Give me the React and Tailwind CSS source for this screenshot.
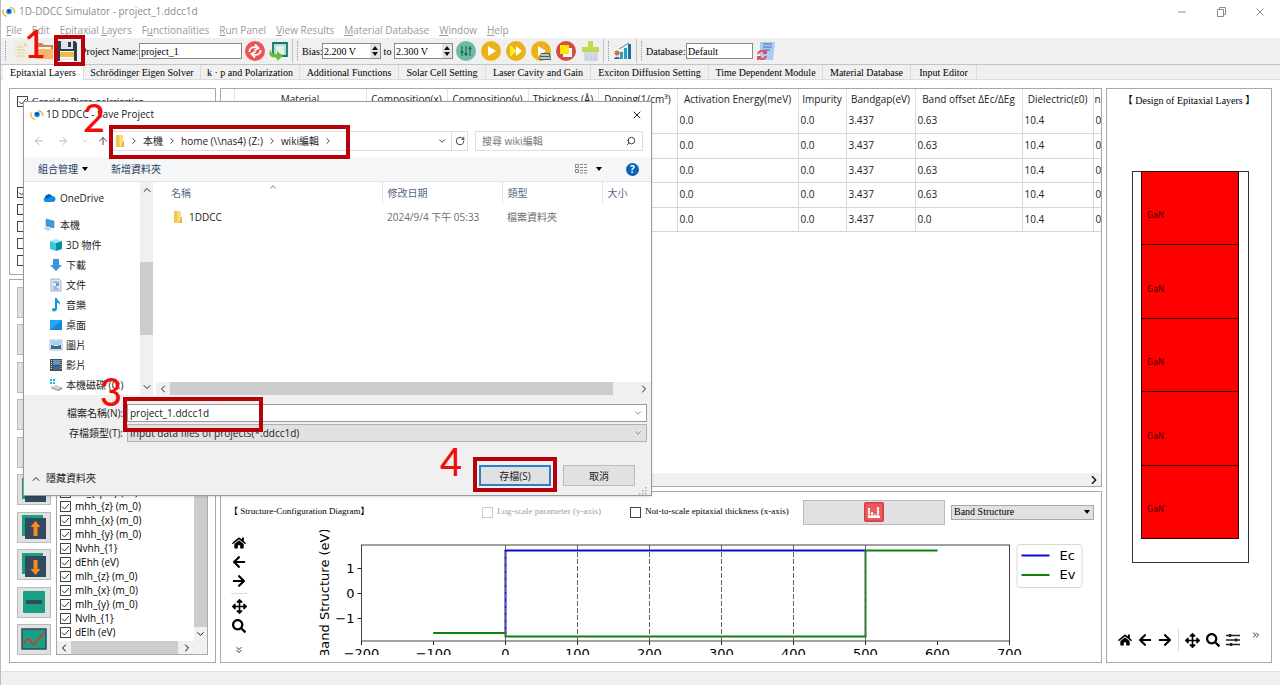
import React, {useState} from 'react'
import {
  FaHome,
  FaArrowLeft,
  FaArrowRight,
  FaArrowsAlt,
  FaSearch,
} from 'react-icons/fa'
import {
  LuArrowLeft,
  LuArrowRight,
  LuArrowUp,
  LuChevronDown,
  LuChevronLeft,
  LuChevronRight,
  LuChevronUp,
  LuChevronsDown,
  LuChevronsRight,
  LuMinus,
  LuRotateCw,
  LuSearch,
  LuX,
} from 'react-icons/lu'

const menus = [
  ['', 'F', 'ile'],
  ['', 'E', 'dit'],
  ['', 'E', 'pitaxial ', 'L', 'ayers'],
  ['F', 'u', 'nctionalities'],
  ['', 'R', 'un Panel'],
  ['', 'V', 'iew Results'],
  ['', 'M', 'aterial Database'],
  ['', 'W', 'indow'],
  ['', 'H', 'elp'],
]

const tabs = [
  {label: 'Epitaxial Layers', width: 'w-[81px]'},
  {label: 'Schrödinger Eigen Solver', width: 'w-[117px]'},
  {label: 'k · p and Polarization', width: 'w-[99px]'},
  {label: 'Additional Functions', width: 'w-[99px]'},
  {label: 'Solar Cell Setting', width: 'w-[87px]'},
  {label: 'Laser Cavity and Gain', width: 'w-[105px]'},
  {label: 'Exciton Diffusion Setting', width: 'w-[118px]'},
  {label: 'Time Dependent Module', width: 'w-[114px]'},
  {label: 'Material Database', width: 'w-[88px]'},
  {label: 'Input Editor', width: 'w-[66px]'},
]

const columns = [
  {label: '', width: 'w-[13px]'},
  {label: 'Material', width: 'w-[132px]'},
  {label: 'Composition(x)', width: 'w-[81px]'},
  {label: 'Composition(y)', width: 'w-[81px]'},
  {label: 'Thickness (Å)', width: 'w-[70px]'},
  {label: 'Doping(1/cm³)', width: 'w-[79px]'},
  {label: 'Activation Energy(meV)', width: 'w-[121px]'},
  {label: 'Impurity', width: 'w-[48px]'},
  {label: 'Bandgap(eV)', width: 'w-[69px]'},
  {label: 'Band offset ΔEc/ΔEg', width: 'w-[107px]'},
  {label: 'Dielectric(ε0)', width: 'w-[71px]'},
  {label: 'n', width: 'w-[9px]'},
]

const offsets = ['0.63', '0.63', '0.63', '0.63', '0.0']

const parameters = [
  'dE_{sp/z} (eV)',
  'mhh_{z} (m_0)',
  'mhh_{x} (m_0)',
  'mhh_{y} (m_0)',
  'Nvhh_{1}',
  'dEhh (eV)',
  'mlh_{z} (m_0)',
  'mlh_{x} (m_0)',
  'mlh_{y} (m_0)',
  'Nvlh_{1}',
  'dElh (eV)',
]

const AppLogo = () => (
  <svg viewBox="0 0 14 12" className="h-3 w-3.5 shrink-0">
    <path d="M1.5 3.5A6 5 0 0 0 5 10.5" fill="none" stroke="#f3c45a" strokeWidth="1.8" />
    <path d="M8 1.5A5 4.5 0 0 1 12.5 7" fill="none" stroke="#cfc27a" strokeWidth="1.6" />
    <circle cx="7" cy="5.5" r="2.8" fill="#1b8ae6" />
    <circle cx="7" cy="5" r="1.4" fill="#0a3f9c" />
  </svg>
)

const NewIcon = () => (
  <svg viewBox="0 0 20 20" className="h-5 w-5">
    <path d="M3 1h10l4 4v14H3z" fill="#f3ecd6" />
    <path d="M13 1v4h4z" fill="#ded5b5" />
    <path d="M6 6h6M6 9h8M6 12h8M6 15h8" stroke="#ddd2ac" />
  </svg>
)

const FolderOpenIcon = () => (
  <svg viewBox="0 0 20 20" className="h-5 w-5">
    <path d="M1 2h7l2 2h9v4H1z" fill="#c98850" />
    <path d="M3 6h14v4H3z" fill="#fdf7ef" />
    <path d="M1 8h18v10H2z" fill="#fbb56b" />
  </svg>
)

const FloppyIcon = () => (
  <svg viewBox="0 0 20 20" className="h-5 w-5">
    <path d="M0 0h18l2 2v18H0z" fill="#323c50" />
    <path d="M4 0h12v8H4z" fill="#dfe4ea" />
    <path d="M11 1h3v5h-3z" fill="#323c50" />
    <path d="M3 10h14v10H3z" fill="#fff" />
    <path d="M3 11h14v5H3z" fill="#f2bd3a" />
    <path d="M3 18h14" stroke="#cfd4dc" />
  </svg>
)

const ReloadIcon = () => (
  <svg viewBox="0 0 20 20" className="h-5 w-5">
    <circle cx="10" cy="10" r="10" fill="#ec5453" />
    <g fill="none" stroke="#fff" strokeWidth="1.8">
      <path d="M4.5 11C4 7 8 5 12.5 7" />
      <path d="M10 3.500l3.500 3.500-4 2.500" />
      <path d="M15.5 9C16 13 12 15 7.5 13" />
      <path d="M10 16.500L6.500 13l4-2.500" />
    </g>
  </svg>
)

const ExportIcon = () => (
  <svg viewBox="0 0 20 20" className="h-5 w-5">
    <path d="M4 2h14v13H4z" fill="#b4dcd4" stroke="#177a68" strokeWidth="1.8" />
    <path d="M7 5h8v8H7z" fill="#e3f0ee" />
    <path d="M2 8c-1 4 2 5 6 5v-3l6 5-6 5v-3C2 17-2 14 2 8z" fill="#5fbf35" />
  </svg>
)

const TuneIcon = () => (
  <svg viewBox="0 0 20 20" className="h-5 w-5">
    <circle cx="10" cy="10" r="10" fill="#68bda4" />
    <path d="M6 5v10M10 5v10M14 5v10" stroke="#33635d" strokeWidth="1.2" />
    <path d="M4.500 11h3M8.500 13h3M12.500 7.500h3" stroke="#33635d" strokeWidth="2.2" />
  </svg>
)

const PlayIcon = ({kind}) => (
  <svg viewBox="0 0 20 20" className="h-5 w-5">
    <circle cx="10" cy="10" r="10" fill="#ecb117" />
    {kind === 'fast' ? (
      <>
        <path d="M4 4l7 6-7 6z" fill="#ffee2e" />
        <path d="M10 5l6 5-6 5z" fill="#fff" />
      </>
    ) : (
      <path d="M7 5l8 5-8 5z" fill="#fff" />
    )}
    {kind === 'queue' && (
      <>
        <path d="M10 12h9l1 7H8z" fill="#4b5a63" />
        <path d="M10 14h8M9 17h10" stroke="#dfe7ec" strokeWidth="1.5" />
      </>
    )}
  </svg>
)

const StopIcon = () => (
  <svg viewBox="0 0 20 20" className="h-5 w-5">
    <circle cx="10" cy="10" r="10" fill="#d84b44" />
    <path d="M7 7h9v9H7z" fill="#fff" />
    <path d="M4 4h9v9H4z" fill="#ffe600" />
  </svg>
)

const BroomIcon = () => (
  <svg viewBox="0 0 20 20" className="h-5 w-5">
    <path d="M7 0h5v6h6v5H1V6h6z" fill="#c3d94e" />
    <path d="M3 11h14v9H3z" fill="#d2dae6" />
    <path d="M6 14v6M10 14v6M14 14v6" stroke="#bcc6d4" />
  </svg>
)

const ResultsIcon = () => (
  <svg viewBox="0 0 20 20" className="h-5 w-5">
    <path d="M7 11h3v7H7zM11 7h3v11h-3z" fill="#2b9dbf" />
    <path d="M15 3h3v15h-3z" fill="#1a6f9c" />
    <path d="M6 8l5-3 5-3" stroke="#2b9dbf" fill="none" />
    <circle cx="4" cy="12" r="2.5" fill="#c8743c" />
    <path d="M1 18c1-3 5-3 6 0z" fill="#2f6f8c" />
  </svg>
)

const DatabaseIcon = () => (
  <svg viewBox="0 0 20 20" className="h-5 w-5">
    <path d="M4 1h15l-2 18H4z" fill="#a9cdf0" />
    <path d="M7 3h9M7 6h9M7 9h7" stroke="#466fae" strokeWidth="1.2" />
    <g fill="none" stroke="#e4475d" strokeWidth="1.8">
      <path d="M2 13c1-4 6-4 8-1M10 9v3H7" />
      <path d="M10 15c-1 4-6 4-8 1M2 19v-3h3" />
    </g>
  </svg>
)

const SlidersIcon = () => (
  <svg viewBox="0 0 14 14" className="h-3.5 w-3.5">
    <path d="M0 2.500h14M0 7h14M0 11.500h14" stroke="#222" strokeWidth="1.3" />
    <path d="M4 1v3M10 5.500v3M5 10v3" stroke="#222" strokeWidth="2.4" />
  </svg>
)

const FolderIcon = () => (
  <svg viewBox="0 0 10 12" className="h-3 w-2.5 shrink-0">
    <path d="M1 0h7v12H1z" fill="#fbdc83" />
    <path d="M1 0h3l1 12H1z" fill="#f3c553" />
    <path d="M8 6h1v6H6z" fill="#e8b544" />
  </svg>
)

const CloudIcon = () => (
  <svg viewBox="0 0 14 10" className="h-2.5 w-3.5 shrink-0">
    <path d="M3 9a3 3 0 0 1 0-5 4 4 0 0 1 7-1 3 3 0 0 1 1 6z" fill="#1490df" />
    <path d="M3 4a4 4 0 0 1 7-1L5 6z" fill="#0a5cab" />
  </svg>
)

const PlaceIcon = ({kind}) => (
  <svg viewBox="0 0 14 14" className="h-3.5 w-3.5 shrink-0">
    {kind === 'pc' && (
      <>
        <path d="M4 1l8 2v7L4 8z" fill="#2d9fe8" stroke="#6a7e8e" strokeWidth=".6" />
        <path d="M1 10l4-1 5 2-4 2z" fill="#c7ced4" />
      </>
    )}
    {kind === 'cube' && (
      <>
        <path d="M1 3l6-2 6 2-6 2z" fill="#9cecf5" />
        <path d="M1 3l6 2v8l-6-2z" fill="#38c8dc" />
        <path d="M13 3L7 5v8l6-2z" fill="#0d8ca8" />
      </>
    )}
    {kind === 'download' && <path d="M4 1h6v6h3l-6 6-6-6h3z" fill="#3d92dd" />}
    {kind === 'doc' && (
      <>
        <path d="M2 1h8l2 2v10H2z" fill="#e4eaf0" stroke="#92a0ac" strokeWidth=".8" />
        <path d="M4 4h6M4 9h4M4 11h6" stroke="#5d92c0" />
        <path d="M7 5h3v3H7z" fill="#55a5e0" />
      </>
    )}
    {kind === 'music' && (
      <path d="M6 0h2c0 3 4 3 3 7-1-2-2-2-3-2v6c0 3-5 3-5 1s2-2 3-2z" fill="#1597e5" />
    )}
    {kind === 'desktop' && (
      <>
        <path d="M1 2h12v10H1z" fill="#1485dc" />
        <path d="M1 2h12L3 11H1z" fill="#26a4f3" />
      </>
    )}
    {kind === 'picture' && (
      <>
        <path d="M1 2h12v10H1z" fill="#fff" stroke="#98a4ad" strokeWidth=".8" />
        <path d="M2 3h10v4H2z" fill="#9fd3f2" />
        <path d="M2 7l5 1 5-1v4H2z" fill="#2d6d9b" />
      </>
    )}
    {kind === 'video' && (
      <>
        <path d="M1 1h12v12H1z" fill="#474b50" />
        <path d="M4 2h7v5H4z" fill="#5c93cf" />
        <path d="M4 8h7v4H4z" fill="#3e6594" />
        <path d="M2.500 2v10M12 2v10" stroke="#ddd" strokeDasharray="1 1" />
      </>
    )}
    {kind === 'disk' && (
      <>
        <path d="M1 1h2v2H1zM4 1h2v2H4zM1 4h2v2H1zM4 4h2v2H4z" fill="#1bb0ee" />
        <path d="M2 9l5-2 6 2-4 3z" fill="#cdd3d8" />
        <path d="M2 9l7 3 4-3v2l-4 2-7-3z" fill="#7d868e" />
      </>
    )}
  </svg>
)

const places = [
  {kind: 'cube', label: '3D 物件'},
  {kind: 'download', label: '下載'},
  {kind: 'doc', label: '文件'},
  {kind: 'music', label: '音樂'},
  {kind: 'desktop', label: '桌面'},
  {kind: 'picture', label: '圖片'},
  {kind: 'video', label: '影片'},
  {kind: 'disk', label: '本機磁碟 (C:)'},
]

const CheckBox = ({id, label, checked = false, disabled = false}) => (
  <span className="flex items-center gap-1 whitespace-nowrap">
    <input
      id={id}
      type="checkbox"
      defaultChecked={checked}
      disabled={disabled}
      aria-label={label ? undefined : id}
      className="peer h-[11px] w-[11px] shrink-0 appearance-none border border-[#444] bg-white bg-center bg-no-repeat checked:bg-[url('data:image/svg+xml,%3Csvg%20xmlns=%22http://www.w3.org/2000/svg%22%20viewBox=%220%200%209%209%22%3E%3Cpath%20d=%22M1%204.500l2.500%202.500L8%202%22%20fill=%22none%22%20stroke=%22%23333%22/%3E%3C/svg%3E')] disabled:border-[#ccc]"
    />
    {label && (
      <label htmlFor={id} className="peer-disabled:text-[#a0a0a0]">
        {label}
      </label>
    )}
  </span>
)

const Grip = () => (
  <span className="mx-1 h-5 border-l border-dotted border-[#999]" />
)

const IconButton = ({label, children}) => (
  <button aria-label={label} className="flex shrink-0 items-center justify-center">
    {children}
  </button>
)

const SpinBox = ({id, value}) => (
  <span className="flex h-4 w-[59px] items-center justify-between border border-[#888] bg-white pl-px">
    <input id={id} aria-label={id} defaultValue={value} className="w-[46px] bg-transparent outline-none" />
    <span className="flex h-full w-2.5 items-center justify-center bg-[#e4e4e4]">
      <svg viewBox="0 0 6 10" className="h-2.5 w-1.5">
        <path d="M0 4l3-4 3 4zM0 6l3 4 3-4z" fill="#111" />
      </svg>
    </span>
  </span>
)

const TitleBar = () => (
  <header className="flex h-[23px] shrink-0 items-center bg-white pr-3.5 pl-px text-[10px] text-[#8c8c8c]">
    <AppLogo />
    <h1 className="ml-[3px]">1D-DDCC Simulator - project_1.ddcc1d</h1>
    <div className="ml-auto flex items-center gap-[27px]">
      <IconButton label="Minimize">
        <LuMinus className="h-3 w-3" />
      </IconButton>
      <IconButton label="Restore">
        <svg viewBox="0 0 12 12" className="h-3 w-3" fill="none" stroke="#8c8c8c">
          <path d="M2.500 3.500h6v7h-6zM4.500 3V1.500h6v7H9" />
        </svg>
      </IconButton>
      <IconButton label="Close">
        <LuX className="h-3 w-3" />
      </IconButton>
    </div>
  </header>
)

const MenuBar = () => (
  <nav className="flex h-[15px] shrink-0 items-center gap-2.5 bg-white pl-[5px] text-[10px] text-[#999]">
    {menus.map(([before, key, rest, key2, rest2]) => (
      <button key={key + rest} className="whitespace-nowrap">
        {before}
        <u>{key}</u>
        {rest}
        {key2 && <u>{key2}</u>}
        {rest2}
      </button>
    ))}
  </nav>
)

const ToolBar = () => (
  <div className="flex h-[27px] shrink-0 items-center border-b border-[#c4c4c4] bg-[#f0f0f0] font-['Liberation_Serif',serif] text-[10px] whitespace-nowrap">
    <Grip />
    <div className="ml-px flex gap-[3px]">
      <IconButton label="New"><NewIcon /></IconButton>
      <IconButton label="Open"><FolderOpenIcon /></IconButton>
      <IconButton label="Save"><FloppyIcon /></IconButton>
    </div>
    <label htmlFor="project" className="ml-1 w-[58px]">Project Name:</label>
    <input id="project" defaultValue="project_1" className="mr-[3px] h-4 w-[103px] border border-[#888] bg-white pl-px outline-none" />
    <div className="flex gap-1">
      <IconButton label="Reload"><ReloadIcon /></IconButton>
      <IconButton label="Export"><ExportIcon /></IconButton>
    </div>
    <span className="ml-[3px] h-6 border-l border-[#c4c4c4]" />
    <Grip />
    <label htmlFor="Bias from" className="w-5">Bias:</label>
    <SpinBox id="Bias from" value="2.200 V" />
    <span className="w-[13px] text-center">to</span>
    <SpinBox id="Bias to" value="2.300 V" />
    <div className="ml-[3px] flex gap-[5px]">
      <IconButton label="Tune"><TuneIcon /></IconButton>
      <IconButton label="Run"><PlayIcon /></IconButton>
      <IconButton label="Run all"><PlayIcon kind="fast" /></IconButton>
      <IconButton label="Queue"><PlayIcon kind="queue" /></IconButton>
      <IconButton label="Stop"><StopIcon /></IconButton>
      <IconButton label="Clean"><BroomIcon /></IconButton>
    </div>
    <span className="ml-0.5 h-6 border-l border-[#c4c4c4]" />
    <Grip />
    <IconButton label="Results"><ResultsIcon /></IconButton>
    <span className="ml-[3px] h-6 border-l border-[#c4c4c4]" />
    <Grip />
    <label htmlFor="database" className="w-10">Database:</label>
    <input id="database" defaultValue="Default" className="mr-[3px] h-4 w-[67px] border border-[#888] bg-white pl-px outline-none" />
    <IconButton label="Refresh database"><DatabaseIcon /></IconButton>
  </div>
)

const TabStrip = ({active, onSelect}) => (
  <div role="tablist" className="flex h-[15px] shrink-0 border-b border-[#dcdcdc] bg-[#f0f0f0] pl-0.5 font-['Liberation_Serif',serif] text-[10px]">
    {tabs.map((tab, index) => (
      <button
        key={tab.label}
        role="tab"
        aria-selected={index === active}
        onClick={() => onSelect(index)}
        className={`${tab.width} h-[15px] shrink-0 whitespace-nowrap border-r border-[#dcdcdc] text-center leading-[14px] ${
          index === active ? 'bg-white' : ''
        }`}
      >
        {tab.label}
      </button>
    ))}
  </div>
)

const OptionsPanel = () => (
  <section className="flex h-[187px] flex-col border border-[#a8a8a8] bg-white pt-[5px] pl-[7px] font-['Liberation_Serif',serif] text-[10px]">
    <CheckBox id="piezo" label="Consider Piezo-polarization" checked />
    <div className="mt-auto mb-2 flex flex-col gap-1.5">
      <CheckBox id="option-1" checked />
      <CheckBox id="option-2" />
      <CheckBox id="option-3" />
      <CheckBox id="option-4" />
      <CheckBox id="option-5" />
    </div>
  </section>
)

const LayerSquares = ({arrow}) => (
  <svg viewBox="0 0 26 26" className="h-[26px] w-[26px]">
    <path d="M1 1h21v21H1z" fill="#18a085" />
    <path d="M4 4h21v21H4z" fill="#34495e" />
    {arrow === 'up' && (
      <path d="M14.500 7l5 6h-3v9h-4v-9h-3z" fill="#f78d1e" />
    )}
    {arrow === 'down' && (
      <path d="M14.500 23l5-6h-3V8h-4v9h-3z" fill="#f78d1e" />
    )}
  </svg>
)

const ToolButton = ({label, children}) => (
  <button aria-label={label} className="flex h-[31px] w-[34px] items-center justify-center border border-[#bbb] bg-[#e1e1e1]">
    {children}
  </button>
)

const ParameterPanel = () => (
  <section className="flex min-h-0 flex-1 gap-[5px] border border-[#a8a8a8] bg-white p-[7px]">
    <div className="flex flex-col justify-between">
      <ToolButton label="Add" />
      <ToolButton label="Insert" />
      <ToolButton label="Copy" />
      <ToolButton label="Edit" />
      <ToolButton label="Load" />
      <ToolButton label="Duplicate">
        <LayerSquares />
      </ToolButton>
      <ToolButton label="Move up">
        <LayerSquares arrow="up" />
      </ToolButton>
      <ToolButton label="Move down">
        <LayerSquares arrow="down" />
      </ToolButton>
      <ToolButton label="Remove">
        <svg viewBox="0 0 24 24" className="h-6 w-6">
          <rect x="1" y="1" width="22" height="22" rx="1" fill="#18a085" />
          <path d="M4 12h16" stroke="#34495e" strokeWidth="4" />
        </svg>
      </ToolButton>
      <ToolButton label="Plot">
        <svg viewBox="0 0 26 22" className="h-[22px] w-[26px]">
          <rect x="1" y="1" width="24" height="20" fill="#18a085" stroke="#34495e" strokeWidth="1.5" />
          <path d="M3 16c3-7 5-6 7-2s4 2 6-1 4-6 7-8" fill="none" stroke="#d8362f" strokeWidth="1.8" />
        </svg>
      </ToolButton>
    </div>
    <div className="flex min-w-0 flex-1 flex-col border border-[#a8a8a8]">
      <div className="flex min-h-0 flex-1">
        <ul className="flex min-h-0 flex-1 flex-col justify-end overflow-hidden pb-0.5 pl-[3px] text-[10px] leading-[14px]">
          {parameters.map((name) => (
            <li key={name} className="h-3.5 shrink-0">
              <CheckBox id={name} label={name} checked />
            </li>
          ))}
        </ul>
        <div className="flex w-[13px] flex-col bg-[#f0f0f0]">
          <div className="flex-1 bg-[#cdcdcd]" />
          <LuChevronDown className="h-3.5 w-[13px] p-px" />
        </div>
      </div>
      <div className="flex h-[13px] items-center bg-[#f0f0f0] pr-[13px]">
        <LuChevronLeft className="h-3 w-3.5" />
        <div className="h-full flex-1 bg-[#cdcdcd]" />
        <LuChevronRight className="ml-0.5 h-3 w-3.5" />
      </div>
    </div>
  </section>
)

const LayerTable = () => (
  <section className="flex h-[399px] flex-col overflow-hidden border border-[#a8a8a8] bg-white">
    <table className="w-[881px] table-fixed border-collapse text-[10px] whitespace-nowrap text-[#222]">
      <thead>
        <tr className="h-5">
          {columns.map((column, index) => (
            <th key={index} className={`${column.width} border-r border-[#e4e4e4] p-0 text-center font-normal`}>
              {column.label}
            </th>
          ))}
        </tr>
      </thead>
      <tbody>
        {offsets.map((offset, row) => (
          <tr key={row} className="h-6 even:h-[25px]">
            {['', '', '', '', '', '', '0.0', '0.0', '3.437', offset, '10.4', '0'].map((value, index) => (
              <td key={index} className="border-r border-b border-[#d8d8d8] p-0 pl-0.5">
                {value}
              </td>
            ))}
          </tr>
        ))}
      </tbody>
    </table>
    <div className="mt-auto flex h-[13px] items-center justify-end bg-[#f0f0f0]">
      <LuChevronRight className="h-3.5 w-3.5" />
    </div>
  </section>
)

const ticks = [-200, -100, 0, 100, 200, 300, 400, 500, 600, 700]
const scaleX = (value) => 188 + value * 0.72

const BandChart = () => (
  <svg
    viewBox="0 0 776 125"
    className="h-[125px] min-w-0 flex-1 overflow-hidden font-['DejaVu_Sans',sans-serif] text-[13px]"
  >
    <text transform="translate(11 63) rotate(-90)" textAnchor="middle">
      Band Structure (eV)
    </text>
    {[1, 0, -1].map((value) => (
      <g key={value}>
        <path d={`M40 ${63.5 - value * 25}h4`} stroke="#222" />
        <text x="37" y={68 - value * 25} textAnchor="end">
          {String(value).replace('-', '−')}
        </text>
      </g>
    ))}
    {ticks.map((value) => (
      <g key={value}>
        <path d={`M${scaleX(value)} 111v4`} stroke="#222" />
        <text x={scaleX(value)} y="128" textAnchor="middle">
          {String(value).replace('-', '−')}
        </text>
      </g>
    ))}
    <path d="M116 103H188V20.500H548" fill="none" stroke="#0b0bd8" strokeWidth="2" />
    <path d="M116 103H188V106.500H548V20.500H620" fill="none" stroke="#0e800e" strokeWidth="2" />
    {[0, 100, 200, 300, 400, 500].map((value) => (
      <path key={value} d={`M${scaleX(value)} 15v96`} stroke="#666" strokeDasharray="5 2" />
    ))}
    <rect x="44" y="15" width="648" height="96" fill="none" stroke="#444" />
    <rect x="699.500" y="14.500" width="65" height="43" rx="3" fill="#fff" stroke="#d8d8d8" />
    <path d="M704 25.500h28" stroke="#0b0bd8" strokeWidth="2" />
    <path d="M704 45h28" stroke="#0e800e" strokeWidth="2" />
    <text x="742" y="30">Ec</text>
    <text x="742" y="49">Ev</text>
  </svg>
)

const DiagramPanel = () => (
  <section className="flex min-h-0 flex-1 flex-col border border-[#a8a8a8] bg-white pt-2 pr-[7px] pb-[7px] pl-2">
    <div className="flex h-6 items-center font-['Liberation_Serif',serif] text-[9px] whitespace-nowrap">
      <h2 className="font-['Liberation_Serif','Noto_Sans_CJK_TC',serif]">【 Structure-Configuration Diagram】</h2>
      <div className="ml-auto flex items-center">
        <span className="w-[148px]">
          <CheckBox id="log-scale" label="Log-scale parameter (y-axis)" disabled />
        </span>
        <span className="w-[173px]">
          <CheckBox id="not-to-scale" label="Not-to-scale epitaxial thickness (x-axis)" />
        </span>
        <button aria-label="Plot diagram" className="mr-1.5 flex h-[25px] w-[142px] items-center justify-center border border-[#bbb] bg-[#e1e1e1]">
          <svg viewBox="0 0 20 20" className="h-5 w-5">
            <rect width="20" height="20" rx="2" fill="#d33f42" />
            <rect x="1.500" y="1.500" width="17" height="17" rx="1" fill="#e85a5c" />
            <path d="M5 15V6M8 15v-5M11 15v-3M14 15V5" stroke="#fff" strokeWidth="2.2" strokeDasharray="2 .4" />
            <path d="M4 15h12" stroke="#fff" strokeWidth="2" />
          </svg>
        </button>
        <span className="relative text-[10px]">
          <select aria-label="Diagram type" className="h-[15px] w-[143px] appearance-none border border-[#aaa] bg-[#e1e1e1] pl-0.5 leading-3">
            <option>Band Structure</option>
          </select>
          <svg viewBox="0 0 6 4" className="pointer-events-none absolute top-1.5 right-1 h-1 w-1.5">
            <path d="M0 0h6L3 4z" />
          </svg>
        </span>
      </div>
    </div>
    <div className="mt-auto flex">
      <div className="mr-[69px] ml-px flex h-[125px] w-[18px] flex-col items-center gap-[5px] pt-1.5">
        <IconButton label="Home"><FaHome className="h-3.5 w-3.5" /></IconButton>
        <IconButton label="Back"><FaArrowLeft className="h-3.5 w-3.5" /></IconButton>
        <IconButton label="Forward"><FaArrowRight className="h-3.5 w-3.5" /></IconButton>
        <span className="w-4 border-t border-[#ddd]" />
        <IconButton label="Pan"><FaArrowsAlt className="h-[15px] w-[15px]" /></IconButton>
        <IconButton label="Zoom"><FaSearch className="h-3.5 w-3.5" /></IconButton>
        <span className="mt-auto">
          <IconButton label="More"><LuChevronsDown className="h-2.5 w-2.5" /></IconButton>
        </span>
      </div>
      <BandChart />
    </div>
  </section>
)

const LayerStack = () => (
  <section className="flex w-[166px] shrink-0 flex-col items-center border border-[#a8a8a8] bg-white pt-1.5">
    <h2 className="font-['Liberation_Serif','Noto_Sans_CJK_TC',serif] text-[10px] leading-3 whitespace-nowrap">
      【 Design of Epitaxial Layers 】
    </h2>
    <div className="mt-16 ml-[3px] h-[392px] w-[117px] border border-[#333] pr-[9px] pl-2 font-['DejaVu_Sans',sans-serif] text-[8px] text-[#400]">
      {[1, 2, 3, 4, 5].map((layer) => (
        <div key={layer} className="-mt-px flex h-[75px] items-center border border-[#300] bg-[#ff0000] pt-4 pl-[5px] odd:h-[74px]">
          GaN
        </div>
      ))}
    </div>
    <div className="mt-auto mb-1.5 flex h-8 w-full items-center gap-1.5 pr-2.5 pl-[11px]">
      <IconButton label="Home"><FaHome className="h-3.5 w-3.5" /></IconButton>
      <IconButton label="Back"><FaArrowLeft className="h-3.5 w-3.5" /></IconButton>
      <IconButton label="Forward"><FaArrowRight className="h-3.5 w-3.5" /></IconButton>
      <span className="h-6 border-l border-[#ddd]" />
      <IconButton label="Pan"><FaArrowsAlt className="h-[15px] w-[15px]" /></IconButton>
      <IconButton label="Zoom"><FaSearch className="h-3.5 w-3.5" /></IconButton>
      <IconButton label="Configure"><SlidersIcon /></IconButton>
      <span className="ml-auto self-start pt-1.5">
        <IconButton label="More"><LuChevronsRight className="h-2.5 w-2.5" /></IconButton>
      </span>
    </div>
  </section>
)

const SaveDialog = () => (
  <div
    role="dialog"
    aria-label="Save Project"
    className="absolute top-[101px] left-[22px] z-10 flex h-[395px] w-[629px] flex-col border border-[#999] bg-white text-[10px] whitespace-nowrap text-[#222] shadow-sm"
  >
    <div className="flex h-[25px] items-center pr-2 pl-1.5">
      <AppLogo />
      <h2 className="ml-0.5">1D DDCC - Save Project</h2>
      <span className="ml-auto"><IconButton label="Close dialog"><LuX className="h-3 w-3" /></IconButton></span>
    </div>

    {/* Address bar */}
    <div className="flex h-7 items-center pr-2 pl-[9px]">
      <div className="flex w-[77px] items-center gap-3 text-[#bbb]">
        <LuArrowLeft className="h-3 w-3" />
        <LuArrowRight className="h-3 w-3" />
        <LuChevronDown className="h-2 w-2" />
        <LuArrowUp className="-ml-1 h-3 w-3 shrink-0 text-[#444]" />
      </div>
      <div className="flex h-5 min-w-0 flex-1 items-center border border-[#dedede] pl-1">
        <FolderIcon />
        <LuChevronRight className="mx-1 h-2.5 w-2.5" />
        <span>本機</span>
        <LuChevronRight className="mx-1 h-2.5 w-2.5" />
        <span>home (\\nas4) (Z:)</span>
        <LuChevronRight className="mx-1 h-2.5 w-2.5" />
        <span>wiki編輯</span>
        <LuChevronRight className="mx-1 h-2.5 w-2.5" />
        <LuChevronDown className="mr-1 ml-auto h-2.5 w-2.5" />
        <button aria-label="Refresh" className="flex h-full w-4 items-center justify-center border-l border-[#dedede]">
          <LuRotateCw className="h-2.5 w-2.5" />
        </button>
      </div>
      <div className="ml-[7px] flex h-5 w-[168px] items-center border border-[#dedede] px-1.5">
        <input aria-label="Search" placeholder="搜尋 wiki編輯" className="min-w-0 flex-1 outline-none placeholder:text-[#777]" />
        <LuSearch className="h-2.5 w-2.5 -scale-x-100" />
      </div>
    </div>

    {/* Command bar */}
    <div className="mt-0.5 flex h-[25px] shrink-0 items-center border-b border-[#e5e5e5] bg-[#f5f6f7] pr-3 pl-3.5 text-[#1e395b]">
      <button className="flex w-[73px] items-center gap-1">
        組合管理
        <svg viewBox="0 0 6 4" className="h-1 w-1.5"><path d="M0 0h6L3 4z" /></svg>
      </button>
      <button>新增資料夾</button>
      <div className="ml-auto flex items-center">
        <svg viewBox="0 0 14 12" className="h-3 w-3.5" fill="none" stroke="#888">
          <path d="M1.500 1.500h3v3h-3zM1.500 6.500h3v3h-3zM6 1.500h3M10 1.500h3M6 4.500h3M10 4.500h3M6 7.500h3M10 7.500h3M6 10h3M10 10h3" />
        </svg>
        <svg viewBox="0 0 6 4" className="mr-6 ml-2 h-1 w-1.5"><path d="M0 0h6L3 4z" /></svg>
        <button aria-label="Help" className="h-[13px] w-[13px] rounded-full bg-[#0a63b8] text-[10px] leading-[13px] font-bold text-white">?</button>
      </div>
    </div>

    <div className="flex min-h-0 flex-1">
      <div className="flex w-[116px] flex-col overflow-hidden pt-1.5 leading-5">
        <div className="mb-[7px] flex h-5 shrink-0 items-center gap-1 pl-[18px]">
          <CloudIcon />
          OneDrive
        </div>
        <div className="flex h-5 shrink-0 items-center gap-1 pl-[18px]">
          <PlaceIcon kind="pc" />
          本機
        </div>
        {places.map((place) => (
          <div key={place.label} className="flex h-5 shrink-0 items-center gap-[3px] pl-[25px]">
            <PlaceIcon kind={place.kind} />
            {place.label}
          </div>
        ))}
      </div>
      <div className="flex w-[13px] flex-col items-center bg-[#f0f0f0] py-0.5">
        <LuChevronUp className="h-3 w-3" />
        <div className="mt-[66px] h-[73px] w-full bg-[#cdcdcd]" />
        <LuChevronDown className="mt-auto h-3 w-3" />
      </div>
      <div className="flex min-w-0 flex-1 flex-col pl-[3px]">
        <table className="w-full table-fixed">
          <thead>
            <tr className="h-[22px] text-[#55698a]">
              <th className="w-[226px] border-r border-[#e5e5e5] p-0 pl-[15px] text-left font-normal">
                <span className="relative flex">
                  名稱
                  <LuChevronUp className="absolute -top-1 left-[97px] h-2.5 w-2.5" />
                </span>
              </th>
              <th className="w-[120px] border-r border-[#e5e5e5] p-0 pl-[5px] text-left font-normal">修改日期</th>
              <th className="w-[100px] border-r border-[#e5e5e5] p-0 pl-[5px] text-left font-normal">類型</th>
              <th className="p-0 pl-[5px] text-left font-normal">大小</th>
            </tr>
          </thead>
          <tbody>
            <tr className="h-[26px] text-[#6d6d6d]">
              <td className="p-0 pl-[17px] text-[#222]">
                <span className="flex items-center gap-1.5">
                  <FolderIcon />
                  1DDCC
                </span>
              </td>
              <td className="p-0 pl-[5px]">2024/9/4 下午 05:33</td>
              <td className="p-0 pl-[5px]">檔案資料夾</td>
              <td />
            </tr>
          </tbody>
        </table>
        <div className="mt-auto flex h-[13px] items-center bg-[#f0f0f0]">
          <LuChevronLeft className="h-3 w-3.5" />
          <div className="mr-6 h-full flex-1 bg-[#cdcdcd]" />
          <LuChevronRight className="h-3 w-3.5" />
        </div>
      </div>
    </div>

    {/* File name and actions */}
    <div className="flex h-[100px] shrink-0 flex-col bg-[#f0f0f0] pt-[9px] pr-1">
      <div className="flex items-center">
        <label htmlFor="file-name" className="w-[103px] pr-1 text-right">檔案名稱(N):</label>
        <span className="relative flex-1">
          <input id="file-name" defaultValue="project_1.ddcc1d" className="block h-[18px] w-full border border-[#999] bg-white pl-0.5 outline-none" />
          <LuChevronDown className="absolute top-1 right-1 h-2.5 w-2.5 text-[#777]" />
        </span>
      </div>
      <div className="mt-0.5 flex items-center">
        <label htmlFor="file-type" className="w-[103px] pr-1 text-right">存檔類型(T):</label>
        <span className="relative flex-1">
          <select id="file-type" className="block h-[18px] w-full appearance-none border border-[#b0b0b0] bg-[#e1e1e1] pl-0.5">
            <option>Input data files of projects(*.ddcc1d)</option>
          </select>
          <LuChevronDown className="pointer-events-none absolute top-1 right-1 h-2.5 w-2.5 text-[#777]" />
        </span>
      </div>
      <div className="mt-[23px] flex h-[21px] items-center gap-3 pr-3">
        <button className="mr-auto flex items-center gap-1 self-end pl-1.5">
          <LuChevronUp className="h-3 w-3" />
          隱藏資料夾
        </button>
        <button className="h-[21px] w-[72px] border-2 border-[#2b7fcb] bg-[#e1e1e1] leading-4">存檔(S)</button>
        <button className="h-[21px] w-[72px] border border-[#bbb] bg-[#e1e1e1] leading-4">取消</button>
      </div>
      <svg viewBox="0 0 8 8" className="mt-auto h-2 w-2 self-end" fill="#aaa">
        <path d="M6 0h1.500v1.500H6zM3 3h1.500v1.500H3zM6 3h1.500v1.500H6zM0 6h1.500v1.500H0zM3 6h1.500v1.500H3zM6 6h1.500v1.500H6z" />
      </svg>
    </div>
  </div>
)

// numbered step markers laid over the window
const Steps = () => (
  <div className="pointer-events-none font-['Lato',sans-serif] text-[38px] leading-[38px] font-medium text-[#f20d0d]">
    <span className="absolute top-[24px] left-[23px] z-20">1</span>
    <div className="absolute top-[35px] left-[53px] z-20 h-[31px] w-[31px] border-4 border-[#b80008]" />
    <span className="absolute top-[98px] left-[82px] z-20">2</span>
    <div className="absolute top-[125px] left-[108px] z-20 h-[34px] w-[241px] border-4 border-[#b80008]" />
    <span className="absolute top-[372px] left-[99px] z-20">3</span>
    <div className="absolute top-[397px] left-[122px] z-20 h-[35px] w-[140px] border-4 border-[#b80008]" />
    <span className="absolute top-[442px] left-[439px] z-20">4</span>
    <div className="absolute top-[457px] left-[472px] z-20 h-[35px] w-[84px] border-4 border-[#b80008]" />
  </div>
)

const App = () => {
  const [activeTab, setActiveTab] = useState(0)

  return (
    <div className="relative flex h-screen flex-col overflow-hidden border-l border-[#bbb] bg-white font-['Open_Sans','Noto_Sans_CJK_TC',sans-serif] text-black">
      <TitleBar />
      <MenuBar />
      <ToolBar />
      <TabStrip active={activeTab} onSelect={setActiveTab} />
      <main className="flex min-h-0 flex-1 gap-1 pt-2 pr-2 pb-2 pl-2">
        <div className="flex w-[207px] shrink-0 flex-col gap-1">
          <OptionsPanel />
          <ParameterPanel />
        </div>
        <div className="flex min-w-0 flex-1 flex-col gap-1">
          <LayerTable />
          <DiagramPanel />
        </div>
        <LayerStack />
      </main>
      <footer className="h-3.5 shrink-0 border-t border-[#e0e0e0] bg-[#f0f0f0]" />
      <SaveDialog />
      <Steps />
    </div>
  )
}

export default App
